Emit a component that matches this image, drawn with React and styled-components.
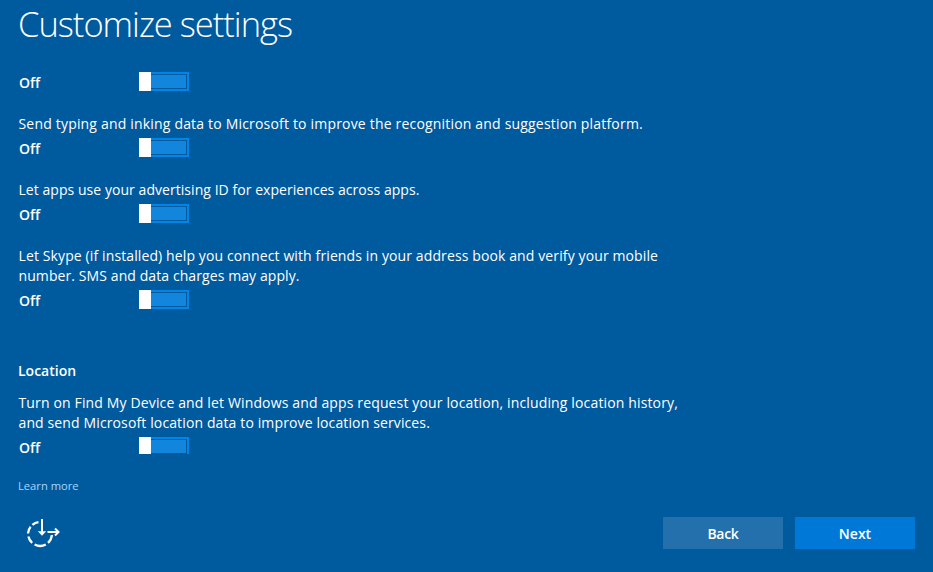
import React from "react";
import styled, { createGlobalStyle } from "styled-components";

const GlobalStyle = createGlobalStyle`
  * { box-sizing: border-box; }
  body { margin: 0; background: #005a9e; }
`;

const Page = styled.main`
  display: flex;
  flex-direction: column;
  width: 933px;
  height: 572px;
  padding: 0 18px;
  overflow: hidden;
  background: #005a9e;
  color: #fff;
  font-family: "Open Sans", "Noto Sans", sans-serif;
  font-size: 14px;
  line-height: 20px;
`;

const Title = styled.h1`
  margin: 0;
  height: 72px;
  font-size: 34.5px;
  font-weight: 300;
  line-height: 48px;
  letter-spacing: -1px;
  white-space: nowrap;
`;

const Setting = styled.section`
  margin-bottom: ${(p) => p.$gap}px;
`;

const Description = styled.p`
  margin: 0 0 4px;
`;

const Line = styled.span`
  display: block;
  padding-left: 0.5px;
  white-space: nowrap;
  letter-spacing: ${(p) => p.$spacing}px;
`;

const Control = styled.div`
  display: flex;
  height: ${(p) => p.$height}px;
`;

const State = styled.span`
  width: 121px;
  padding: 1px 0 0 1px;
  font-weight: 600;
`;

const Track = styled.button`
  display: flex;
  width: 50px;
  height: 100%;
  padding: 0;
  border: 2px solid #0085eb;
  border-width: ${(p) => (p.$clipped ? "2px 2px 0 0" : "2px 2px 2px 0")};
  background: #005a9e;
`;

const Thumb = styled.span`
  width: 12px;
  height: ${(p) => p.$height}px;
  margin-top: -2px;
  background: #fff;
`;

const Fill = styled.span`
  flex: 1;
  align-self: stretch;
  margin: 1px 1px 1px 0;
  background: #1186dc;
`;

const SectionTitle = styled.h2`
  margin: 0 0 12px;
  font-size: 14px;
  font-weight: 600;
  line-height: 20px;
`;

const LearnMore = styled.a`
  height: 20px;
  font-size: 11.2px;
  color: #a6d8ff;
`;

const Footer = styled.footer`
  display: flex;
  gap: 12px;
  margin-top: 21px;
  height: 32px;
`;

const EaseIcon = styled.svg`
  width: 36px;
  height: 32px;
  margin: 0 auto 0 7px;
  fill: none;
  stroke: #fff;
  stroke-width: 2;
`;

const Button = styled.button`
  width: 120px;
  height: 32px;
  padding: 1px 0 0;
  border: 0;
  background: ${(p) => (p.$primary ? "#0078d7" : "#2470ac")};
  color: #fff;
  font: 600 14px/20px "Open Sans", "Noto Sans", sans-serif;
  letter-spacing: ${(p) => (p.$primary ? 0 : -0.3)}px;
`;

function Toggle({ clipped = false }) {
  const height = clipped ? 17 : 19;
  return (
    <Control $height={height}>
      <State>Off</State>
      <Track role="switch" aria-checked="false" $clipped={clipped}>
        <Thumb $height={height} />
        <Fill />
      </Track>
    </Control>
  );
}

const settings = [
  { gap: 23, lines: [] },
  { gap: 23, lines: [["Send typing and inking data to Microsoft to improve the recognition and suggestion platform.", 0.185]] },
  { gap: 23, lines: [["Let apps use your advertising ID for experiences across apps.", 0.05]] },
  {
    gap: 52,
    lines: [
      ["Let Skype (if installed) help you connect with friends in your address book and verify your mobile", 0.115],
      ["number. SMS and data charges may apply.", 0.09],
    ],
  },
  {
    gap: 22,
    title: "Location",
    clipped: true,
    lines: [
      ["Turn on Find My Device and let Windows and apps request your location, including location history,", 0.142],
      ["and send Microsoft location data to improve location services.", 0.125],
    ],
  },
];

export default function App() {
  return (
    <Page>
      <GlobalStyle />
      <Title>Customize settings</Title>
      {settings.map((s, i) => (
        <Setting key={i} $gap={s.gap}>
          {s.title && <SectionTitle>{s.title}</SectionTitle>}
          {s.lines.length > 0 && (
            <Description>
              {s.lines.map(([text, spacing]) => (
                <Line key={text} $spacing={spacing}>{text}</Line>
              ))}
            </Description>
          )}
          <Toggle clipped={s.clipped} />
        </Setting>
      ))}
      <LearnMore>Learn more</LearnMore>
      <Footer>
        <EaseIcon viewBox="25 517 36 32" aria-label="Ease of Access">
          <path d="M51.9 535A12 12 0 0 1 48 542.9M45.8 544.5A12 12 0 0 1 34.6 544.5M32.2 542.9A12 12 0 0 1 28.4 536.5M28 533.5A12 12 0 0 1 30.6 526.8M32.4 524.8A12 12 0 0 1 38.5 522.1" strokeWidth="2.3" />
          <path d="M42 519V533M47.5 532H58" />
          <path d="M37.8 531.2H46.2L42 535.8Z" fill="#fff" stroke="none" />
          <path d="M55 528.5L58.5 532L55 535.5" />
        </EaseIcon>
        <Button>Back</Button>
        <Button $primary>Next</Button>
      </Footer>
    </Page>
  );
}
